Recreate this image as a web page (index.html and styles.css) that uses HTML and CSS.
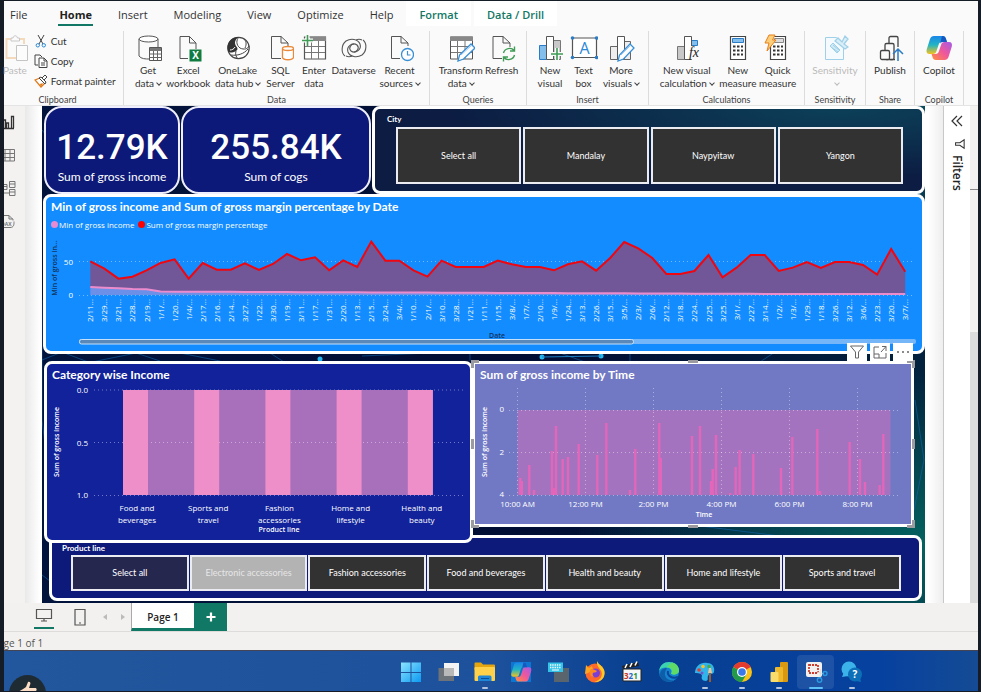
FILE: index.html
```html
<!DOCTYPE html>
<html lang="en">
<head>
<meta charset="utf-8">
<meta name="viewport" content="width=device-width, initial-scale=1">
<title>Sales report</title>
<link rel="stylesheet" href="styles.css">
</head>
<body>
<div class="app">
  <nav class="tabs" aria-label="Ribbon tabs">
    <a href="#" class="file">File</a><a href="#" class="current">Home</a><a href="#">Insert</a><a href="#">Modeling</a><a href="#">View</a><a href="#">Optimize</a><a href="#">Help</a><a href="#" class="context">Format</a><a href="#" class="context wide">Data / Drill</a>
  </nav>

  <div class="ribbon">
    <section class="group clipboard">
      <div class="tools">
        <button class="tool off"><svg class="ico" viewBox="0 0 28 28"><path d="M10 5H5.500v19H15M18 5h5v5" fill="none" stroke="#f5d9bd" stroke-width="2"/><path d="M10 7V4h2c.5-3 4-3 4.500 0h2v3z" fill="#fafafa" stroke="#c8c8c8"/><path d="M15.500 11.500h11v15h-11z" fill="#fcfcfc" stroke="#c4c4c4"/></svg>Paste</button>
        <div class="stack">
          <button><svg viewBox="0 0 14 14"><path d="M4 1l5 9M10 1L5 10" stroke="#444" fill="none"/><circle cx="3.800" cy="11.300" r="1.700" fill="none" stroke="#2b88d8"/><circle cx="9.800" cy="11.300" r="1.700" fill="none" stroke="#2b88d8"/></svg>Cut</button>
          <button><svg viewBox="0 0 14 14"><path d="M4 11H1V1h5l2 2" stroke="#444" fill="none"/><path d="M5 4h5l3 3v6.500H5z" fill="#fff" stroke="#444"/><path d="M10 4v3h3M7 9h4M7 11h4" fill="none" stroke="#444"/></svg>Copy</button>
          <button><svg viewBox="0 0 14 14"><path d="M1 6l5-2 5 5-4 4z" fill="#fff" stroke="#e07b1c" stroke-width="1.300"/><path d="M6 10l3-1-2 4z" fill="#e07b1c"/><path d="M5 4l2-1 5 5-1 2zM8 4l3-3 2 2-3 3" fill="#fff" stroke="#444"/></svg>Format painter</button>
        </div>
      </div>
      <p>Clipboard</p>
    </section>
    <section class="group data">
      <div class="tools">
        <button class="tool"><svg class="ico" viewBox="0 0 28 28"><path d="M5 5v17c2 3 7 3 10 3M24 5v8" fill="none" stroke="#555"/><ellipse cx="14.500" cy="5" rx="9.500" ry="3" fill="#fff" stroke="#555"/><path d="M15.500 13.500h12v13h-12z" fill="#fff" stroke="#555"/><path d="M16 14h11v3H16z" fill="#777"/><path d="M15.500 20h12M15.500 23.500h12M19.500 17v9M23.500 17v9" stroke="#666"/></svg>Get<br>data<i class="chev"></i></button>
        <button class="tool"><svg class="ico" viewBox="0 0 28 28"><path d="M14 24.500H6v-22h9.500l6.500 6.500v6M15.500 2.500v6.500h6.500" fill="none" stroke="#555"/><path d="M15.500 15.500h12v12h-12z" fill="#117c41"/><text x="21.500" y="25" class="xl">X</text></svg>Excel<br>workbook</button>
        <button class="tool"><svg class="ico" viewBox="0 0 28 28"><circle cx="14.500" cy="14" r="10.700" fill="#fff" stroke="#444" stroke-width="1.200"/><path d="M4 17C2 9 7 3 15 3c-4 2-5 6-3 9 2 2 2 4 0 5-4 2-7 2-8 0z" fill="#333"/><path d="M15 3c-3 3-3 8 1 11 4 2 8 1 9-2M20 5c2 2 3 5 1 9" fill="none" stroke="#444"/><path d="M7 21c6 1 13-1 17-6M12 17c-1 3 0 6 2 8" fill="none" stroke="#444"/><path d="M6 16c2 0 4-1 5-3" stroke="#fff" fill="none"/></svg>OneLake<br>data hub<i class="chev"></i></button>
        <button class="tool"><svg class="ico" viewBox="0 0 28 28"><path d="M15 24.500H5.500v-22H15l7 6.500v3M15 2.500V9h7" fill="none" stroke="#555"/><path d="M16.500 14.500v9c1 3 10 3 11 0v-9" fill="#fff" stroke="#e8893b" stroke-width="1.300"/><ellipse cx="22" cy="14.500" rx="5.500" ry="2" fill="#fff" stroke="#e8893b" stroke-width="1.300"/></svg>SQL<br>Server</button>
        <button class="tool"><svg class="ico" viewBox="0 0 28 28"><path d="M4.500 3h21v22h-21z" fill="#fff" stroke="#555" stroke-width="1.200"/><path d="M10 2.500h16V7H10z" fill="#888"/><path d="M5 12.500h20M5 18.500h20M11.500 7v18M18.500 7v18" stroke="#777"/><path d="M7.500 1v11M2 6.500h11" stroke="#fafafa" stroke-width="4"/><path d="M7.500 1v11M2 6.500h11" stroke="#3f9c56" stroke-width="1.600"/></svg>Enter<br>data</button>
        <button class="tool"><svg class="ico" viewBox="0 0 28 28"><g fill="none" stroke="#555" stroke-width="1.100"><path d="M23 6c4 3 4 11-1 15-5 3-12 2-14-3-2-6 5-10 9-7 3 3 0 7-3 7"/><path d="M5 22c-4-3-4-11 1-15 5-3 12-2 14 3 2 6-5 10-9 7-3-3 0-7 3-7"/><path d="M6 22c2 1 4 1 6 0M22 6c-2-1-4-1-6 0"/></g></svg>Dataverse</button>
        <button class="tool"><svg class="ico" viewBox="0 0 28 28"><path d="M14 24.500H5.500v-22H15l7 6.500v3M15 2.500V9h7" fill="none" stroke="#555"/><circle cx="21.500" cy="20.500" r="6" fill="#fff" stroke="#3a8fd6" stroke-width="1.300"/><path d="M21.500 17v4h3" fill="none" stroke="#3a8fd6" stroke-width="1.200"/></svg>Recent<br>sources<i class="chev"></i></button>
      </div>
      <p>Data</p>
    </section>
    <section class="group queries">
      <div class="tools">
        <button class="tool"><svg class="ico" viewBox="0 0 28 28"><path d="M3.500 3h22v22h-22z" fill="#fff" stroke="#555"/><path d="M3 2.500h23V7H3z" fill="#888"/><path d="M4 12.500h21M4 18.500h21M10.500 7v18M18 7v18" stroke="#777"/><path d="M11 27l1.500-6L24 10l4 4-11.500 11z" fill="#fff" stroke="#3a8fd6" stroke-width="1.300"/><path d="M14 21l11-10" stroke="#9ccaf0"/></svg>Transform<br>data<i class="chev"></i></button>
        <button class="tool"><svg class="ico" viewBox="0 0 28 28"><path d="M14 24.500H5v-22h10l7 6.500v4M15 2.500V9h7" fill="none" stroke="#555"/><path d="M15.500 19c1-5 8-6 10.500-2.500M26.500 12.500v4.500H22M26.500 21c-1 5-8 6-10.500 2.500M15.500 27.500V23H20" fill="none" stroke="#3f9c56" stroke-width="1.400"/></svg>Refresh</button>
      </div>
      <p>Queries</p>
    </section>
    <section class="group insert">
      <div class="tools">
        <button class="tool"><svg class="ico" viewBox="0 0 28 28"><path d="M3.500 11.500h7v14h-7z" fill="#83beec" stroke="#2b7cc4"/><path d="M17.500 6.500h7v19h-7z" fill="#c8c8c8" stroke="#777"/><path d="M10.500 2.500h7v23h-7z" fill="#fff" stroke="#555"/><path d="M21 14v12M15 20h12" stroke="#fafafa" stroke-width="4"/><path d="M21 14v12M15 20h12" stroke="#3f9c56" stroke-width="1.600"/></svg>New<br>visual</button>
        <button class="tool"><svg class="ico" viewBox="0 0 28 28"><path d="M2.500 4h24v19.500h-24z" fill="#fff" stroke="#555" stroke-width="1.200"/><g fill="#2b7cc4"><circle cx="2.500" cy="4" r="1.800"/><circle cx="26.500" cy="4" r="1.800"/><circle cx="2.500" cy="23.500" r="1.800"/><circle cx="26.500" cy="23.500" r="1.800"/></g><text x="14.500" y="20" class="abox">A</text></svg>Text<br>box</button>
        <button class="tool"><svg class="ico" viewBox="0 0 28 28"><path d="M3.500 12.500h7v13h-7zM17.500 7.500h6v18h-6z" fill="#eee" stroke="#666"/><path d="M10.500 2.500h7v23h-7z" fill="#fff" stroke="#555"/><path d="M11 27l1.500-6L23 10l4 4-10.500 11z" fill="#fff" stroke="#3a8fd6" stroke-width="1.300"/><path d="M14 21l10-10" stroke="#9ccaf0"/></svg>More<br>visuals<i class="chev"></i></button>
      </div>
      <p>Insert</p>
    </section>
    <section class="group calc">
      <div class="tools">
        <button class="tool"><svg class="ico" viewBox="0 0 28 28"><path d="M4.500 12.500h7v13h-7z" fill="#c8c8c8" stroke="#777"/><path d="M17.500 6.500h7v5h-7z" fill="#83beec" stroke="#2b7cc4"/><path d="M11.500 2.500h7v23h-7z" fill="#fff" stroke="#555"/><path d="M17 12h9v13h-9z" fill="#fafafa"/><text x="21" y="23" class="fx">fx</text></svg>New visual<br>calculation<i class="chev"></i></button>
        <button class="tool"><svg class="ico" viewBox="0 0 28 28"><path d="M6.500 2.500h15v23h-15z" fill="#fff" stroke="#444" stroke-width="1.200"/><path d="M8.500 4.500h11v4h-11z" fill="#83beec" stroke="#2b7cc4"/><path d="M9 12.500h10M9 16.500h10M9 20.500h10" stroke="#333" stroke-width="2.200" stroke-dasharray="2.500 1.500"/></svg>New<br>measure</button>
        <button class="tool"><svg class="ico" viewBox="0 0 28 28"><path d="M6.500 2.500h15v23h-15z" fill="#fff" stroke="#444" stroke-width="1.200"/><path d="M10.500 4.500h9v4h-9z" fill="#ddd" stroke="#888"/><path d="M9 12.500h10M9 16.500h10M9 20.500h10" stroke="#333" stroke-width="2.200" stroke-dasharray="2.500 1.500"/><path d="M5 1h6L8.500 6H12L3 17l2-8H1z" fill="#fbcf7c" stroke="#e8801a"/></svg>Quick<br>measure</button>
      </div>
      <p>Calculations</p>
    </section>
    <section class="group">
      <div class="tools one">
        <button class="tool off"><svg class="ico" viewBox="0 0 28 28"><path d="M4.500 3.500h11l7 8v14h-18z" fill="#f4fafd" stroke="#9fd0e8"/><path d="M9 12l3-3 7 7-3 3z" fill="#cfe9f5" stroke="#9fd0e8"/><path d="M10 13l7 5M12 11l6 5" stroke="#9fd0e8"/><path d="M14 7l3-3 4 4 3-6 3 3-4 5 4 3-3 2z" fill="#d9eef7" stroke="#9fd0e8" stroke-width="1.300"/></svg>Sensitivity<br><i class="chev"></i></button>
      </div>
      <p>Sensitivity</p>
    </section>
    <section class="group">
      <div class="tools one">
        <button class="tool"><svg class="ico" viewBox="0 0 28 28"><g fill="#fafafa" stroke="#444" stroke-width="1.300"><rect x="13" y="2.500" width="9" height="23" rx="1.500"/><rect x="9" y="9.500" width="9" height="16" rx="1.500"/><rect x="4.500" y="16.500" width="9" height="9" rx="1.500"/></g><path d="M19 13h8v14h-8z" fill="#fafafa"/><path d="M22 27V15M17 20l5-5 5 5" fill="none" stroke="#2b7cc4" stroke-width="1.500"/></svg>Publish</button>
      </div>
      <p>Share</p>
    </section>
    <section class="group">
      <div class="tools one">
        <button class="tool"><svg class="ico" viewBox="0 0 28 28"><use href="#copilot"/></svg>Copilot</button>
      </div>
      <p>Copilot</p>
    </section>
    <div></div>
  </div>

  <main class="work">
    <nav class="rail" aria-label="Views">
      <button aria-label="Report view"><svg viewBox="0 0 16 16"><path d="M3.500 14V6h2v8M6.500 14v-5h2v5M11.500 14V2.500h2V14M1 14.500h13" fill="none" stroke="#333" stroke-width="1.300"/></svg></button>
      <button aria-label="Table view"><svg viewBox="0 0 16 16"><path d="M1 2.500h13.500v11.500H1zM1 6.500h13.500M1 10.500h13.500M5 2.500V14M10 2.500V14" fill="none" stroke="#777"/></svg></button>
      <button aria-label="Model view"><svg viewBox="0 0 16 16"><path d="M1 4.500h6v5H1zM1 6.500h6M9.500 1.500h5.500v6H9.500zM9.500 4h5.500M9.500 9.500h5.500v6H9.500zM9.500 12h5.500M3.500 9.500v3.500h6" fill="none" stroke="#777"/></svg></button>
      <button aria-label="DAX view"><svg viewBox="0 0 16 16"><path d="M1 2.500h8l4 4v1M9 2.500V6h4M2 14.500h8c4 0 4-3 4-6" fill="none" stroke="#777"/><text x="1" y="13" class="dax">DAX</text></svg></button>
    </nav>

    <div class="stage">
      <div class="report">
        <svg class="net" viewBox="42 106 883 497" preserveAspectRatio="none" aria-hidden="true">
          <g fill="none" stroke="#1065ae" stroke-opacity=".6"><path d="M42 360l20-8 26 10M92 362l44-9 24 8M180 353l40 8M270 353l14 9M362 356l90-4M470 353v8M560 353l25 9M630 353v9M775 352l-15 10M42 130l5 6M42 300v120l5 40M42 575l8 6M376 150l60-43M600 107l50 25 80-20M808 192v-16l40-60M915 400l9 60-10 50M700 526l80 10"/></g>
          <g fill="#22b8f0"><circle cx="320" cy="359" r="2.500"/><circle cx="542" cy="357" r="2.500"/><circle cx="601" cy="356" r="2.500"/></g><path d="M542 357l59-1" stroke="#1b7fc4"/>
        </svg>

        <div class="top">
          <article class="kpi"><strong>12.79K</strong><span>Sum of gross income</span></article>
          <article class="kpi"><strong>255.84K</strong><span>Sum of cogs</span></article>
          <section class="slicer city">
            <h2>City</h2>
            <div class="tiles">
              <button>Select all</button><button>Mandalay</button><button>Naypyitaw</button><button>Yangon</button>
            </div>
          </section>
        </div>

        <section class="visual trend">
          <h2>Min of gross income and Sum of gross margin percentage by Date</h2>
          <div class="legend"><span class="pink">Min of gross income</span><span class="red">Sum of gross margin percentage</span></div>
          <svg id="trend" viewBox="46 234 876 117" role="img" aria-label="Gross income and margin by date"></svg>
        </section>

        <div class="pair">
          <section class="visual category">
            <h2>Category wise Income</h2>
            <svg id="category" viewBox="47 383 423 157" role="img" aria-label="Gross income by product line"></svg>
          </section>
          <section class="visual time">
            <div class="actions">
              <button aria-label="Filters"><svg viewBox="0 0 16 16"><path d="M1.500 2h13L9.500 8v6h-3V8z" fill="none" stroke="#666"/></svg></button>
              <button aria-label="Focus mode"><svg viewBox="0 0 16 16"><path d="M7 3H2v11h12V9M2 10h5v4M10 2.500h4V7M14 2.500L9 8" fill="none" stroke="#666"/></svg></button>
              <button aria-label="More options"><svg viewBox="0 0 16 16"><g fill="#666"><circle cx="3" cy="8" r="1"/><circle cx="8" cy="8" r="1"/><circle cx="13" cy="8" r="1"/></g></svg></button>
            </div>
            <h2>Sum of gross income by Time</h2>
            <svg id="time" viewBox="475 383 436 141" role="img" aria-label="Gross income by time"></svg>
            <i class="h nw"></i><i class="h n"></i><i class="h ne"></i><i class="h w"></i><i class="h e"></i><i class="h sw"></i><i class="h s"></i><i class="h se"></i>
          </section>
        </div>

        <section class="slicer product">
          <h2>Product line</h2>
          <div class="tiles">
            <button class="hover">Select all</button><button class="picked">Electronic accessories</button><button>Fashion accessories</button><button>Food and beverages</button><button>Health and beauty</button><button>Home and lifestyle</button><button>Sports and travel</button>
          </div>
        </section>
      </div>
    </div>

    <aside class="filters">
      <button aria-label="Expand filters"><svg viewBox="0 0 14 14"><path d="M7 2L2 7l5 5M12 2L7 7l5 5" fill="none" stroke="#333" stroke-width="1.200"/></svg></button>
      <svg viewBox="0 0 14 14"><path d="M13 2v10L8 8.500H3v-3h5z" fill="none" stroke="#333" stroke-width="1.200"/></svg>
      <h2>Filters</h2>
    </aside>
    <aside class="panes"><div class="p1"></div><div class="p2"></div><div class="p3"></div></aside>
  </main>

  <div class="pages">
    <button class="view on" aria-label="Desktop layout"><svg viewBox="0 0 18 18"><path d="M1.500 3.500h15v9h-15zM9 12.500v2.500M6 15h6" fill="none" stroke="#555" stroke-width="1.200"/></svg></button>
    <button class="view" aria-label="Mobile layout"><svg viewBox="0 0 18 18"><path d="M4 1.500h10v15.500H4zM8 15h2" fill="none" stroke="#555" stroke-width="1.200"/></svg></button>
    <button class="step" aria-label="Previous page"><svg viewBox="0 0 8 8"><path d="M6 1v6L2 4z" fill="#bbb"/></svg></button>
    <button class="step" aria-label="Next page"><svg viewBox="0 0 8 8"><path d="M2 1v6l4-3z" fill="#bbb"/></svg></button>
    <button class="page">Page 1</button>
    <button class="add" aria-label="New page"><svg viewBox="0 0 10 10"><path d="M5 .5v9M.5 5h9" stroke="#fff" stroke-width="2.200"/></svg></button>
  </div>
  <footer class="status"><span>Page 1 of 1</span></footer>

  <div class="taskbar">
    <div class="thumb"><svg viewBox="0 0 37 20"><path d="M9 17c3-2 6-3 8-5l2-5c2-1 3 1 2 3l-1 3h6c2 0 2 2 1 3l-2 3H11z" fill="#fbdcc4"/></svg></div>
    <div class="apps">
      <button aria-label="Start"><svg viewBox="0 0 24 24"><path d="M2 2.500h9.500V12H2zM12.500 2.500H22V12h-9.500zM2 13h9.500v9H2zM12.500 13H22v9h-9.500z" fill="url(#win)"/></svg></button>
      <button aria-label="Task view"><svg viewBox="0 0 24 24"><path d="M8 3h15v13H8z" fill="#f3f3f3"/><path d="M2.500 8H18v13H2.500z" fill="#777" fill-opacity=".9"/><path d="M8 8h10v8H8z" fill="#b9b9b9"/></svg></button>
      <button class="run" aria-label="File Explorer"><svg viewBox="0 0 24 24"><path d="M1.500 3.500q0-1 1-1H8l2 2h11q1 0 1 1V10H1.500z" fill="#e5a50f"/><path d="M1.500 8q0-1 1-1H21q1 0 1 1v12q0 1-1 1H2.500q-1 0-1-1z" fill="#ffd04a"/><path d="M5 21v-4q0-1.500 1.500-1.500H17q1.500 0 1.500 1.500v4z" fill="#1d86d8"/><path d="M8 18.500h8" stroke="#0b4f96"/></svg></button>
      <button aria-label="Microsoft 365 Copilot"><svg viewBox="0 0 24 24"><path d="M2 2h20v20H2z" fill="#0d76d2"/><g transform="translate(1 1) scale(.79)"><use href="#copilot"/></g></svg></button>
      <button aria-label="On-screen keyboard"><svg viewBox="0 0 24 24"><path d="M8 8h15v14H8z" fill="#59646d"/><path d="M2 2.500h15V12H2z" fill="#35c4e8"/><path d="M4 5h11M4 7.500h11" stroke="#fff" stroke-width="1.300" stroke-dasharray="1.300 1"/><path d="M6 10h7" stroke="#fff"/></svg></button>
      <button aria-label="Firefox"><svg viewBox="0 0 24 24"><circle cx="12" cy="13" r="9.500" fill="#ff6a2b"/><path d="M14 1c1 3 6 5 7.500 10 1 8-5 11.500-10 11 7-2 9-8 6-12-2-3-4-5-3.500-9z" fill="#ffc928"/><path d="M3 5l3 3 3-2 1 4-5 3-3 1z" fill="#ffa51f"/><circle cx="12.500" cy="13" r="4.500" fill="#7b3fd6"/><path d="M8 9c3 0 4 1 6 2-1 2-3 1-4 2s0 3 1 4c-4 0-6-4-3-8z" fill="#ff8a1e"/></svg></button>
      <button aria-label="Media Player Classic"><svg viewBox="0 0 24 24"><path d="M3 9h18v12H3z" fill="#f6f6f6" stroke="#222"/><path d="M2 6l16-4 1 4L3 9z" fill="#222"/><path d="M5 8l2-4M10 7l2-4M15 5.500l2-4" stroke="#fff" stroke-width="1.600"/><text x="4" y="18.500" class="mpc"><tspan fill="#c8321e">3</tspan><tspan fill="#2364c4">2</tspan><tspan fill="#2a9337">1</tspan></text></svg></button>
      <button aria-label="Edge"><svg viewBox="0 0 24 24"><circle cx="12" cy="12" r="10" fill="#1583cf"/><path d="M2 11C3 5 7 2 12 2c6 0 10 4 10 8.500 0 4-6 5-8 3 2-3-1-6-5-6-3 0-6 1-7 3.500z" fill="#3bd2b0"/><path d="M15 2.500c5 1 7 5 7 8 0 4-6 5-8 3 3-4-1-7-5-6z" fill="#5fdc68"/><path d="M9 10c-3 5 0 11 8 10.500-4 2.500-12 2-14-5C3 10 6 8 10 8z" fill="#0e5da8"/><path d="M11 11c-1 5 4 8 10 6" fill="none" stroke="#0b469b" stroke-width="2"/></svg></button>
      <button class="run" aria-label="Paint"><svg viewBox="0 0 24 24"><path d="M2 13C2 6 8 2 14 3c6 0 8 5 7 9-1 3-5 1-6 4-1 2 1 4-2 5-4 0-5-3-4-5 0-2-2-3-7-3z" fill="#31b4ea"/><circle cx="6" cy="10" r="1.800" fill="#e13d33"/><circle cx="10" cy="6.500" r="1.800" fill="#f8c22f"/><circle cx="16" cy="6.500" r="1.800" fill="#45ab4b"/><circle cx="9" cy="13" r="1.500" fill="#7552c8"/><path d="M17 12v10" stroke="#9c5a2a" stroke-width="2"/><path d="M15 13l1-5h2l1 5z" fill="#e9c69d"/></svg></button>
      <button class="run" aria-label="Chrome"><svg viewBox="0 0 24 24"><circle cx="12" cy="12" r="10" fill="#fbc116"/><path d="M12 12L3.300 7A10 10 0 0 1 20.700 7z" fill="#e33b2e"/><path d="M3.300 7A10 10 0 0 0 12 22l4.300-7.500L12 12z" fill="#229a4b"/><circle cx="12" cy="12" r="5" fill="#fff"/><circle cx="12" cy="12" r="3.800" fill="#3b79ea"/></svg></button>
      <button class="run" aria-label="Power BI"><svg viewBox="0 0 24 24"><rect x="13" y="2" width="8" height="20" rx="1" fill="#d99a12"/><rect x="8" y="7" width="8" height="15" rx="1" fill="#eeb92a"/><rect x="3.500" y="12" width="8" height="10" rx="1" fill="#f9dc69"/></svg></button>
      <button class="run active" aria-label="Snipping Tool"><svg viewBox="0 0 24 24"><rect x="2" y="2" width="16" height="15" rx="2" fill="#f1f1f1"/><path d="M5 5h9v8H5z" fill="none" stroke="#cf3c2b" stroke-width="1.800" stroke-dasharray="2 1"/><path d="M13 12l7 2M17 9l-1 9" stroke="#ddd"/><circle cx="15.500" cy="20" r="2.200" fill="none" stroke="#2a9ae0" stroke-width="1.400"/><circle cx="21" cy="13.500" r="2" fill="none" stroke="#2a9ae0" stroke-width="1.400"/></svg></button>
      <button class="run" aria-label="Get Help"><svg viewBox="0 0 24 24"><circle cx="9" cy="9" r="7.500" fill="#3bb3ea"/><path d="M2 17l2-5 4 4z" fill="#3bb3ea"/><circle cx="15" cy="14.500" r="7" fill="#0c6fb8"/><path d="M21 22l-5-1 4-4z" fill="#0c6fb8"/><text x="15" y="18" class="q">?</text></svg></button>
    </div>
  </div>
</div>

<svg class="defs" aria-hidden="true"><defs>
  <linearGradient id="win" x1="0" y1="0" x2="1" y2="1"><stop offset="0" stop-color="#8be3ff"/><stop offset="1" stop-color="#0c9af2"/></linearGradient>
  <linearGradient id="cpA" x1="0" y1="0" x2="0" y2="1"><stop offset="0" stop-color="#1a86e8"/><stop offset=".5" stop-color="#22b5c4"/><stop offset="1" stop-color="#f5c21b"/></linearGradient>
  <linearGradient id="cpB" x1="1" y1="0" x2="0" y2="1"><stop offset="0" stop-color="#a45bea"/><stop offset=".5" stop-color="#f0589a"/><stop offset="1" stop-color="#ff8f3c"/></linearGradient>
  <g id="copilot"><path d="M9 2h8.500c2 0 3 1 3.500 3l1 3h-5c-2 0-3 1-3.500 3l-2 6c-.5 2-1.500 3-3.500 3H4.500c-2.500 0-3.500-2-2.800-4.500L5 5c.7-2 2-3 4-3z" fill="url(#cpA)"/><path d="M19.500 26H11c-2 0-3-1-3.500-3l-1-3h4c2 0 3-1 3.500-3l2-6c.5-2 1.500-3 3.500-3H24c2.500 0 3.500 2 2.800 4.500L23.500 23c-.7 2-2 3-4 3z" fill="url(#cpB)"/><path d="M17.500 2c2 0 3 1 3.500 3l1 3h-4c-1.500 0-2.500.5-3 2l2-8z" fill="#1757c2"/></g>
</defs></svg>
<script src="charts.js"></script>
</body>
</html>
```
FILE: styles.css
```css
* { box-sizing: border-box; margin: 0; }
body {
  background: #161c25;
  color: #333;
  font: 10px/13px "Open Sans", "Noto Sans", sans-serif;
}
button {
  padding: 0;
  border: 0;
  background: none;
  color: inherit;
  font: inherit;
}
svg { display: block; }
.defs { position: absolute; width: 0; height: 0; }
.app {
  display: flex;
  flex-direction: column;
  min-height: 100vh;
  padding: 1px 3px 1px 4px;
  overflow: hidden;
}

/* Ribbon tabs */
.tabs { display: flex; height: 30px; background: #fafafa; padding-left: 5px; font-size: 11px; line-height: 27px; }
.tabs a { color: #333; text-decoration: none; padding: 0 1px; margin: 0 12px; white-space: nowrap; height: 25px; }
.tabs .file { margin: 0 18px 0 0; }
.tabs .current { font-weight: 700; color: #222; border-bottom: 2px solid #117865; }
.tabs .context { color: #117865; font-weight: 600; background: #fff; padding: 0 13px; margin: 0; }
.tabs .wide { margin-left: 3px; }

/* Ribbon groups */
.ribbon {
  display: grid;
  grid-template-columns: 120fr 306fr 97fr 122fr 156fr 61fr 49fr 49fr 14fr;
  height: 75px;
  background: #fafafa;
  border-bottom: 1px solid #e4e4e4;
  font-family: Lato, "Open Sans", sans-serif;
}
.group { display: flex; flex-direction: column; justify-content: space-between; min-width: 0; border-right: 1px solid #dcdcdc; }
.group p { font-size: 9px; line-height: 11px; text-align: center; color: #444; }
.clipboard p { padding-right: 12px; }
.tools { display: grid; padding: 3px 8px 0; }
.data .tools { grid-template-columns: 32fr 49fr 50fr 36fr 31fr 49fr 43fr; }
.queries .tools { grid-template-columns: 46fr 37fr; padding-right: 6px; }
.insert .tools { grid-template-columns: 30fr 37fr 38fr; }
.calc .tools { grid-template-columns: 60fr 43fr 37fr; }
.clipboard .tools { grid-template-columns: 22fr 90fr; padding: 0; gap: 8px; }
.clipboard .tool { padding-top: 3px; }
.tools.one { padding: 3px 0 0; }
.tool { display: flow-root; white-space: nowrap; min-width: 0; text-align: center; align-self: start; margin: 0 -10px; }
.ico { width: 28px; height: 28px; margin: 0 auto 2px; }
.off { color: #bbb; }
.chev { display: inline-block; width: 4px; height: 4px; margin: 0 0 2px 3px; border: solid #444; border-width: 0 1px 1px 0; transform: rotate(45deg); }
.off .chev { border-color: #bbb; }
.stack { display: flex; flex-direction: column; }
.stack button { display: flex; align-items: center; gap: 3px; height: 20px; white-space: nowrap; }
.stack svg { width: 14px; height: 14px; }
.xl { font: 700 10px "Open Sans", sans-serif; fill: #fff; text-anchor: middle; }
.abox { font: 16px "Open Sans", sans-serif; fill: #2b88d8; text-anchor: middle; }
.fx { font: italic 14px "Liberation Serif", serif; fill: #222; text-anchor: middle; }

/* Workspace */
.work { flex: 1; display: flex; background: #fff; }
.rail { display: flex; flex-direction: column; gap: 17px; width: 21px; padding-top: 8px; background: #f3f2f1; overflow: hidden; }
.rail svg { width: 16px; height: 16px; margin-left: -4px; }
.dax { font: 700 5px "Open Sans", sans-serif; fill: #777; }
.stage { flex: 1; min-width: 0; padding: 0 18px 0 17px; background: linear-gradient(90deg, #e9e9e9, #fff 15px, #fff calc(100% - 15px), #eee); }
.report {
  position: relative;
  display: flex;
  flex-direction: column;
  height: 100%;
  padding-left: 1px;
  background:
    radial-gradient(ellipse at 100% 88%, #05625f 0, transparent 28%),
    radial-gradient(ellipse at 100% 0, #0c4a5c 0, transparent 34%),
    linear-gradient(90deg, #02143c, #020d33 55%, #03223e);
}
.report h2 { font: 700 12px/16px Lato, sans-serif; color: #fff; }
.net { position: absolute; inset: 0; width: 100%; height: 100%; }
.top { position: relative; display: grid; grid-template-columns: 136fr 190fr 553fr; gap: 1px; padding-left: 1px; height: 88px; }
.kpi { display: flex; flex-direction: column; align-items: center; padding-top: 20px; border: 2px solid #eef; border-radius: 18px; background: #0d1978; color: #fff; font: 12px/16px Lato, sans-serif; }
.kpi strong { font: 500 35px/40px Roboto, sans-serif; }
.kpi span { padding-top: 1px; }

.slicer { border: 3px solid #fff; border-radius: 8px; }
.slicer .tiles { display: grid; gap: 2px; }
.slicer .tiles button { border: 2px solid #ebebf2; background: #323232; color: #fff; font: 9px/12px Lato, sans-serif; white-space: nowrap; }
.report .slicer h2 { font-size: 8px; line-height: 9px; }
.city { padding: 6px 19px 7px 21px; background: radial-gradient(ellipse at 85% 0, #0c4058, #0c1c42 60%); display: flex; flex-direction: column; }
.city h2 { margin: 0 0 3px -9px; }
.city .tiles { flex: 1; grid-template-columns: repeat(4, 1fr); }

.visual { position: relative; border: 3px solid #fff; border-radius: 8px; }
.visual svg { width: 100%; }
.trend { background: #128cff; padding-top: 2px; }
.trend h2 { padding-left: 5px; }
.legend { display: flex; gap: 4px; height: 19px; padding-left: 5px; align-items: center; color: #fff; font-size: 8px; }
.legend span { display: flex; align-items: center; gap: 1px; }
.legend span::before { content: ""; width: 7px; height: 7px; border-radius: 50%; background: #e68ad2; }
.legend .red::before { background: #f00; }
.pair { display: grid; grid-template-columns: 428fr 442fr; align-items: start; padding: 7px 11px 0 1px; }
.category { z-index: 2; background: #11229b; padding-top: 2px; margin-right: -1px; }
.category h2, .time h2 { padding-left: 5px; line-height: 17px; }
.time { z-index: 3; background: #7179c4; padding-top: 2px; border-radius: 3px; }
.actions { position: absolute; z-index: 4; top: -21px; right: -2px; display: flex; gap: 3px; }
.actions button { background: #fff; padding: 1px 2px; }
.visual .actions svg { width: 16px; height: 16px; }
.h { position: absolute; border: 0 solid #9c9ca0; width: 8px; height: 8px; }
.nw { top: -4px; left: -4px; border-width: 3px 0 0 3px; }
.ne { top: -4px; right: -4px; border-width: 3px 3px 0 0; }
.sw { bottom: -4px; left: -4px; border-width: 0 0 3px 3px; }
.se { bottom: -4px; right: -4px; border-width: 0 3px 3px 0; }
.n, .s { left: 50%; width: 10px; height: 3px; margin-left: -5px; background: #9c9ca0; }
.n { top: -4px; }
.s { bottom: -4px; }
.w, .e { top: 50%; width: 3px; height: 10px; margin-top: -5px; background: #9c9ca0; }
.w { left: -4px; }
.e { right: -4px; }

.product { position: relative; margin: -8px 3px 0 6px; padding: 6px 18px 7px 19px; background: #0d1a7a; }
.product h2 { margin: 0 0 2px -9px; }
.product .tiles { grid-template-columns: repeat(7, 1fr); grid-auto-rows: 36px; gap: 1px; }
.slicer .tiles .hover { background: #26274f; }
.slicer .tiles .picked { background: #b3b3b3; color: #e6e6e6; }

/* Chart marks */
.grid { stroke: #fff; stroke-opacity: .4; stroke-dasharray: 1 3; fill: none; }
.tick, .name { font: 8px "Open Sans", sans-serif; fill: #fff; }
.name { font: 600 7px "Open Sans", sans-serif; }
.mid { text-anchor: middle; }
.end { text-anchor: end; }
.dark { fill: #12355f; }

/* Side panes */
.filters { display: flex; flex-direction: column; align-items: center; gap: 10px; width: 27px; padding-top: 8px; border-left: 1px solid #c8c8c8; }
.filters svg { width: 14px; height: 14px; }
.filters > svg { width: 12px; height: 12px; margin-left: 4px; }
.filters h2 { writing-mode: vertical-rl; font-size: 12px; line-height: 14px; font-weight: 600; color: #222; margin-top: -5px; }
.panes { display: flex; flex-direction: column; width: 8px; background: #f3f2f1; }
.p1 { height: 84px; border-bottom: 1px solid #888; }
.p2 { height: 142px; border-bottom: 34px solid #f3f2f1; }
.p3 { flex: 1; background: #dcdcdc; }

/* Page bar and status bar */
.pages { display: flex; height: 29px; padding-left: 30px; background: #f3f1ef; border-bottom: 1px solid #dedcda; }
.view { width: 20px; padding-right: 1px; padding-left: 1px; margin-right: 16px; }
.view svg { width: 18px; height: 20px; }
.view.on { border-bottom: 2px solid #117865; margin-bottom: 2px; }
.view + .view { margin-right: 6px; }
.step { width: 18px; padding-left: 5px; }
.step svg { width: 8px; height: 8px; }
.page { width: 63px; margin-left: -1px; padding-top: 3px; background: #fff; border-bottom: 3px solid #117865; border-left: 1px solid #aaa; font-weight: 600; color: #222; }
.add { width: 33px; background: #117865; }
.add svg { width: 10px; height: 10px; margin: 0 auto; }
.status { height: 19px; background: #f3f1ef; border-bottom: 1px solid #445; overflow: hidden; line-height: 22px; color: #555; }
.status span { margin-left: -12px; }

/* Taskbar */
.taskbar { position: relative; height: 40px; overflow: hidden; background: linear-gradient(90deg, #22579d, #1d519c 50%, #083f90 66%, #0641a0 90%, #154b94); }
.thumb { position: absolute; left: 5px; top: 24px; width: 37px; height: 37px; border-radius: 50%; background: #1f2b33; }
.apps { display: grid; grid-template-columns: repeat(13, 1fr); height: 100%; padding: 4px 11% 2px 40%; margin-left: -1px; }
.apps button { position: relative; border-radius: 4px; }
.apps svg { width: 24px; height: 24px; margin: 0 auto; }
.apps .active { background: #ffffff18; }
.run::after { content: ""; position: absolute; bottom: 0; left: 50%; width: 6px; height: 2px; margin-left: -3px; border-radius: 1px; background: #b3c3de; }
.run.active::after { width: 14px; margin-left: -7px; background: #5cc0f7; }
.mpc { font: 700 8px "Open Sans", sans-serif; }
.q { font: 700 10px "Open Sans", sans-serif; fill: #fff; text-anchor: middle; }
```
FILE: charts.js
```js
const NS = 'http://www.w3.org/2000/svg';

function add(svg, tag, attrs, text) {
  const el = document.createElementNS(NS, tag);
  for (const key in attrs) el.setAttribute(key, attrs[key]);
  if (text) el.textContent = text;
  svg.appendChild(el);
}

// Margin and income by date
(function () {
  const svg = document.getElementById('trend');
  const dates = '2/11 3/29 3/21 2/28 2/19 1/1/ 1/20 1/4/ 2/17 2/16 2/14 3/27 1/22 3/30 1/19 3/11 1/17 1/31 2/20 1/13 2/15 3/24 3/4/ 1/10 2/1/ 3/10 3/28 1/21 1/11 1/15 3/8/ 1/7/ 2/10 1/9/ 1/24 3/13 2/26 3/15 3/5/ 2/3/ 2/6/ 2/12 3/18 2/24 2/25 3/25 3/1/ 2/27 3/14 1/2/ 1/3/ 1/29 1/18 3/26 3/12 3/6/ 2/23 3/20 3/7/'.split(' ');
  const margin = [50.5, 39.5, 24.5, 27.5, 37, 48, 53.5, 24.5, 48, 38, 38, 47.5, 37.5, 46.5, 61.5, 52, 56.5, 37, 52, 42, 80, 51.5, 51.5, 37, 27.5, 51.5, 42, 42, 42, 51.5, 46, 42, 42, 37, 46, 50.5, 36.5, 55.5, 79.5, 70, 55.5, 31.5, 31.5, 36, 60, 26.5, 41, 60, 60, 36, 41, 49.5, 40.5, 49.5, 49.5, 45, 30.5, 69, 35];
  const income = dates.map((d, i) => [12, 11, 10, 9, 8.5][i] || Math.max(1.5, 5.5 - i * 0.08));
  const x = i => 90.3 + i * 14.05;
  const y = v => 295 - v * 0.667;
  const pts = a => a.map((v, i) => x(i) + ',' + y(v));
  const low = pts(income);
  add(svg, 'path', { class: 'grid', d: 'M79 261.500H915M79 295.500H915' });
  add(svg, 'polygon', { points: pts(margin).concat(low.slice().reverse()).join(' '), fill: '#715798' });
  add(svg, 'polygon', { points: low.concat([x(58) + ',295', x(0) + ',295']).join(' '), fill: '#6c90e8' });
  add(svg, 'polyline', { points: low.join(' '), fill: 'none', stroke: '#ec8ccd', 'stroke-width': 2 });
  add(svg, 'polyline', { points: pts(margin).join(' '), fill: 'none', stroke: '#f00610', 'stroke-width': 2 });
  add(svg, 'text', { class: 'tick end', x: 73, y: 265 }, '50');
  add(svg, 'text', { class: 'tick end', x: 73, y: 298 }, '0');
  add(svg, 'text', { class: 'name dark mid', transform: 'translate(57 268) rotate(-90)' }, 'Min of gross in...');
  dates.forEach((d, i) => add(svg, 'text', { class: 'tick end', transform: `translate(${x(i) + 3} 299) rotate(-90)` }, d + '...'));
  add(svg, 'text', { class: 'name dark mid', x: 497, y: 338 }, 'Date');
  add(svg, 'rect', { x: 79, y: 339, width: 837, height: 5, rx: 2, fill: '#74b6f8' });
  add(svg, 'rect', { x: 79.5, y: 339.5, width: 554, height: 4.500, rx: 2, fill: '#5a88b8', stroke: '#c4e0fa' });
})();

// Ribbon columns by product line
(function () {
  const svg = document.getElementById('category');
  const cols = [['Food and', 'beverages'], ['Sports and', 'travel'], ['Fashion', 'accessories'], ['Home and', 'lifestyle'], ['Health and', 'beauty']];
  add(svg, 'path', { class: 'grid', d: 'M94 390H465M94 442.500H465M94 495.500H465' });
  add(svg, 'rect', { x: 123, y: 390, width: 310, height: 105, fill: '#a86fbb' });
  add(svg, 'path', { class: 'grid', d: 'M123 442.500H433' });
  cols.forEach((c, i) => {
    const left = 123 + i * 71.2;
    add(svg, 'rect', { x: left, y: 390, width: 25, height: 105, fill: '#ee8fc9' });
    add(svg, 'text', { class: 'tick mid', x: left + 14, y: 511 }, c[0]);
    add(svg, 'text', { class: 'tick mid', x: left + 14, y: 523 }, c[1]);
  });
  ['0.0', '0.5', '1.0'].forEach((t, i) => add(svg, 'text', { class: 'tick end', x: 88, y: 393 + i * 52.7 }, t));
  add(svg, 'text', { class: 'name mid', x: 279, y: 532 }, 'Product line');
  add(svg, 'text', { class: 'name mid', transform: 'translate(59 442) rotate(-90)' }, 'Sum of gross income');
})();

// Income by time of day; each bar is [x, top]
(function () {
  const svg = document.getElementById('time');
  const bars = [[520.3, 478], [521.8, 481], [529.3, 465], [534, 490], [552, 451], [554, 488], [556, 426], [562.7, 459], [568, 457], [578.7, 444], [597.3, 455], [606.3, 423], [630, 490], [635.3, 449], [659.3, 423], [660.8, 458], [692, 436], [700, 426], [711, 481], [712.7, 469], [716, 435], [730.3, 493], [735.7, 467], [739.7, 450], [753.3, 454], [781, 468], [792.3, 437], [817.3, 429], [820, 491], [849.7, 442], [860, 459], [865, 482], [879.7, 485], [883.3, 434]];
  add(svg, 'rect', { x: 517.5, y: 410, width: 373, height: 85, fill: '#a373bf' });
  add(svg, 'path', { class: 'grid', d: 'M509 410.500H898M509 452.500H898M509 495.500H898' });
  ['10:00 AM', '12:00 PM', '2:00 PM', '4:00 PM', '6:00 PM', '8:00 PM'].forEach((t, i) => {
    const cx = 517.5 + i * 68;
    add(svg, 'path', { class: 'grid', d: `M${cx} 388V495` });
    add(svg, 'text', { class: 'tick mid', x: cx, y: 507 }, t);
  });
  bars.forEach(b => add(svg, 'rect', { x: b[0] - 1.2, y: b[1], width: 2.4, height: 495 - b[1], fill: '#e267ba' }));
  ['0', '2', '4'].forEach((t, i) => add(svg, 'text', { class: 'tick end', x: 504, y: 412 + i * 42.5 }, t));
  add(svg, 'text', { class: 'name mid', x: 704, y: 517 }, 'Time');
  add(svg, 'text', { class: 'name mid', transform: 'translate(487 442) rotate(-90)' }, 'Sum of gross income');
})();
```
